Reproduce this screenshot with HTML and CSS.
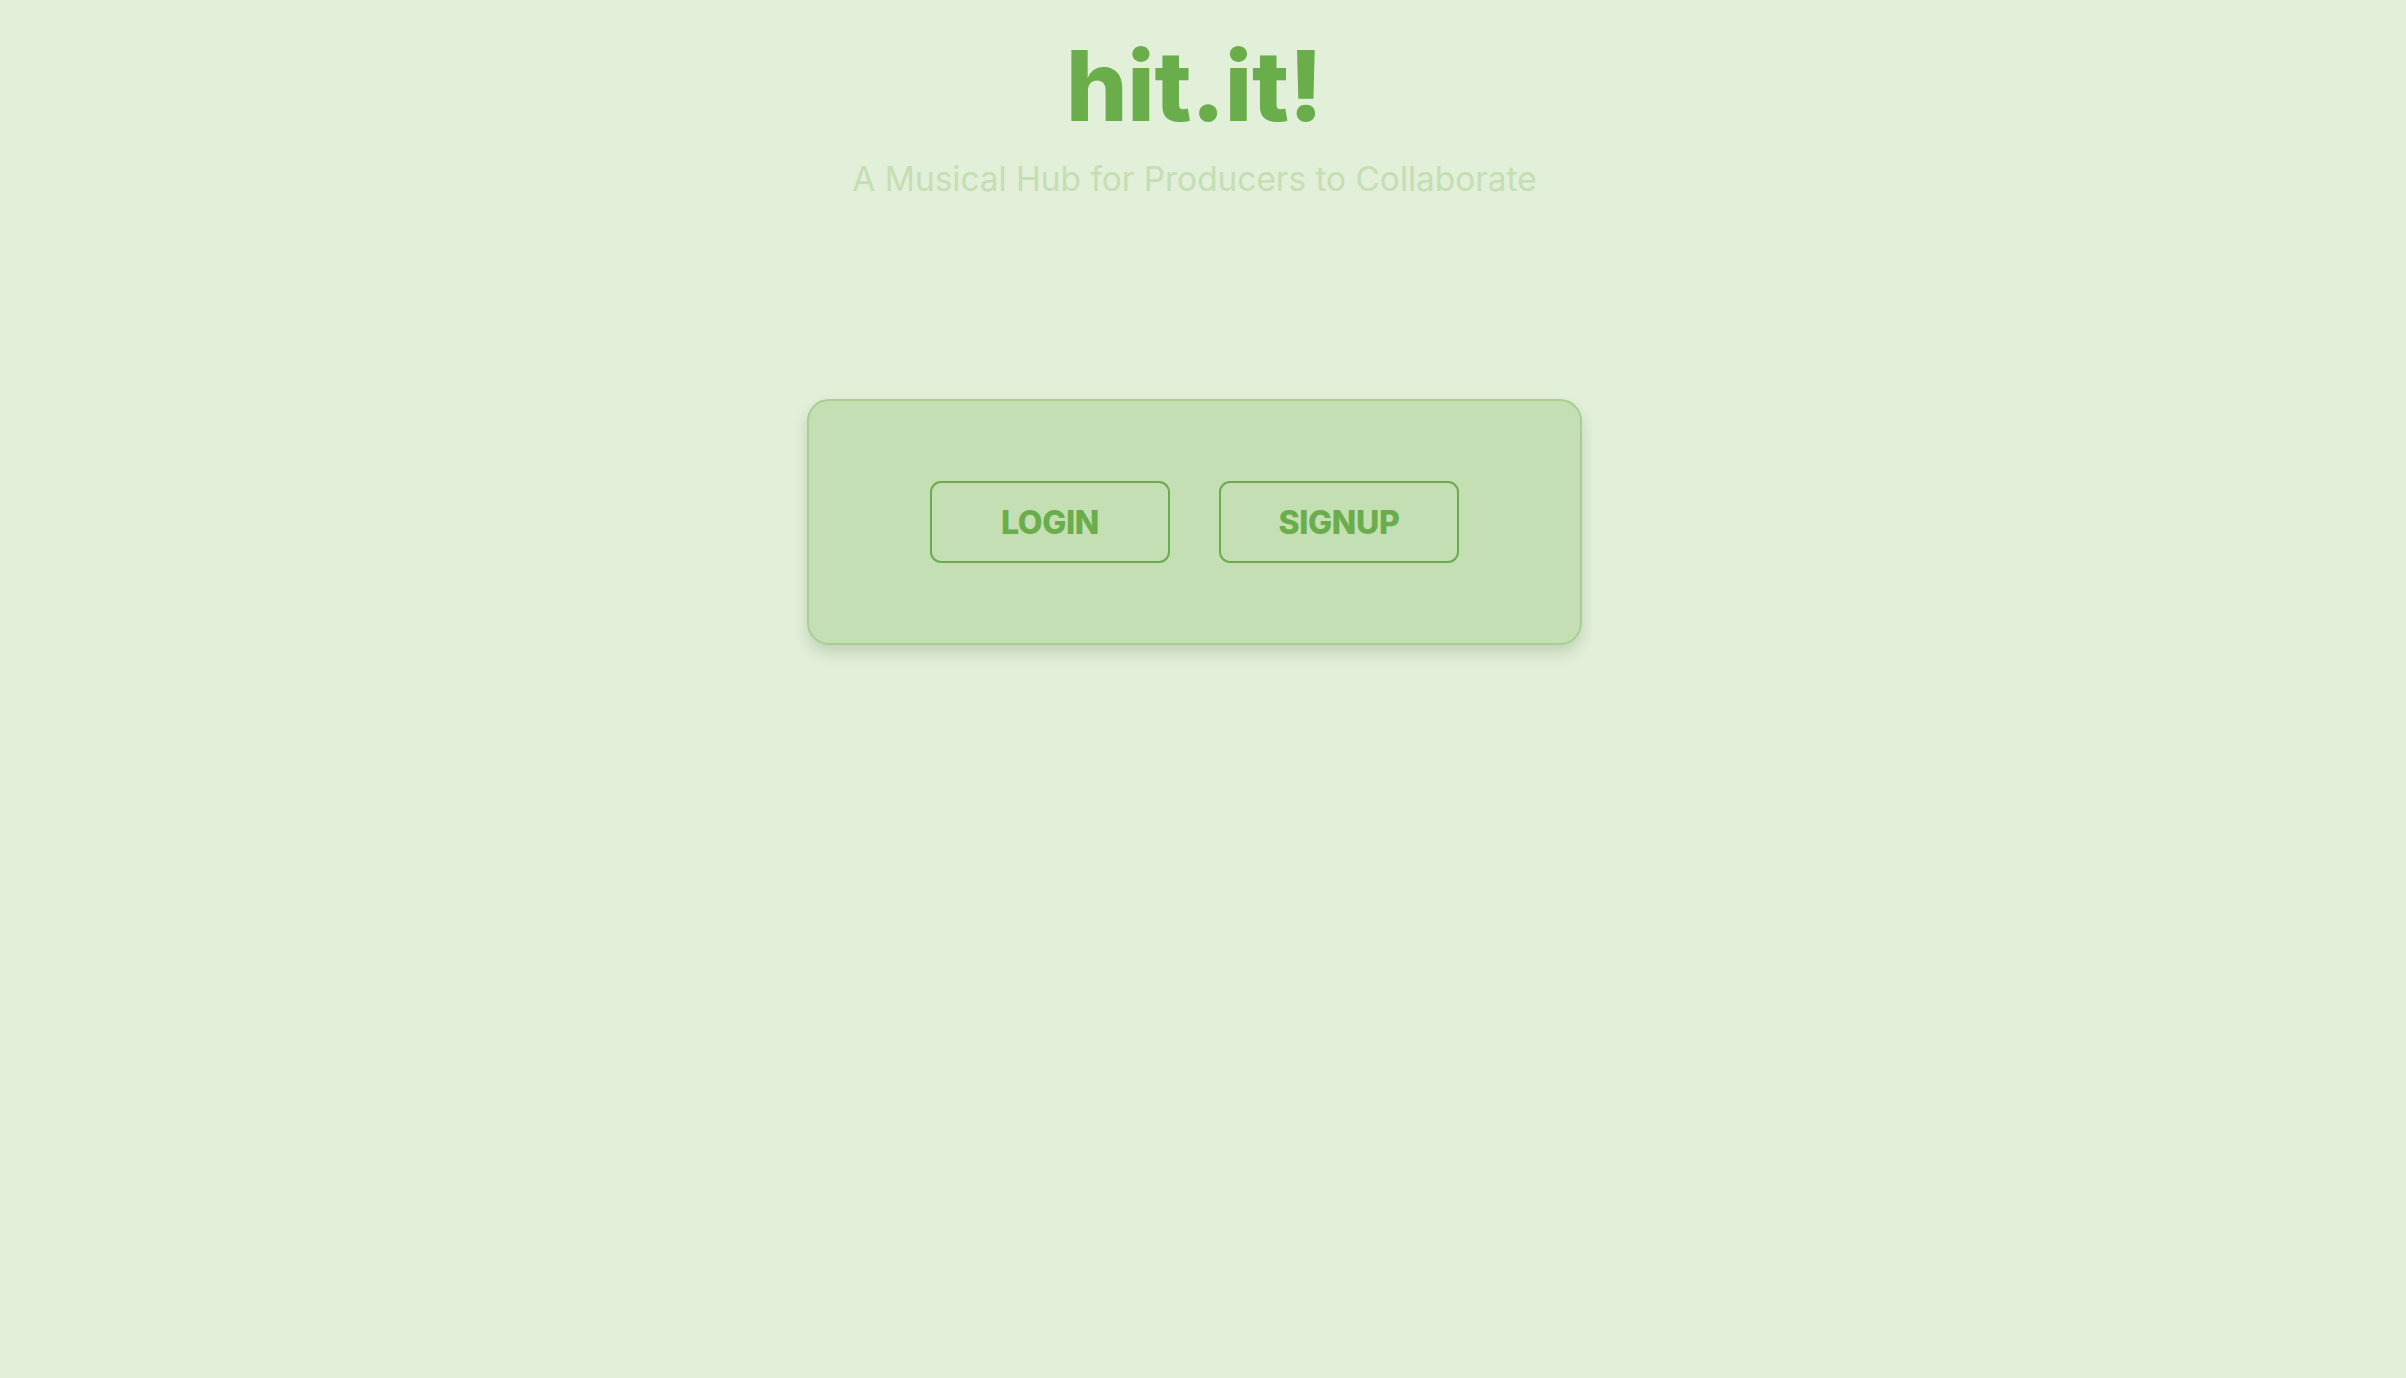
FILE: index.html
```html
<!DOCTYPE html>
<html lang="en">
<head>
<meta charset="utf-8">
<title>hit.it!</title>
<link rel="stylesheet" href="styles.css">
</head>
<body>
<main class="page">
  <header class="hero">
    <h1 class="brand">hit.it!</h1>
    <p class="tagline">A Musical Hub for Producers to Collaborate</p>
  </header>
  <section class="auth-card">
    <button class="auth-btn" type="button">LOGIN</button>
    <button class="auth-btn" type="button">SIGNUP</button>
  </section>
</main>
</body>
</html>
```
FILE: styles.css
```css
html, body {
  margin: 0;
  padding: 0;
  background: #e2efd9;
  min-height: 100%;
}

body {
  font-family: Inter, "Open Sans", "Liberation Sans", sans-serif;
}

.page {
  display: flex;
  flex-direction: column;
  align-items: center;
  padding-right: 17px;
  min-height: 1378px;
  box-sizing: border-box;
}

.hero {
  display: flex;
  flex-direction: column;
  align-items: center;
  margin-top: 38px;
}

.brand {
  margin: 0;
  font-size: 97px;
  line-height: 96px;
  font-weight: 800;
  color: #6aad4b;
  letter-spacing: -0.4px;
}

.tagline {
  margin: 25px 0 0;
  font-size: 33.4px;
  line-height: 40px;
  font-weight: 400;
  color: #c3dfb3;
}

.auth-card {
  margin-top: 200px;
  width: 775px;
  height: 246px;
  box-sizing: border-box;
  background: #c4dfb4;
  border: 2px solid #a6d08f;
  border-radius: 22px;
  box-shadow: 0 8px 14px rgba(60, 90, 40, 0.18);
  display: flex;
  align-items: center;
  justify-content: center;
  gap: 49px;
}

.auth-btn {
  width: 240px;
  height: 82px;
  box-sizing: border-box;
  background: transparent;
  border: 2.5px solid #6aad4b;
  border-radius: 11px;
  color: #6aad4b;
  font-family: Inter, "Open Sans", "Liberation Sans", sans-serif;
  font-size: 32px;
  font-weight: 800;
  letter-spacing: -0.3px;
  cursor: pointer;
}
```
